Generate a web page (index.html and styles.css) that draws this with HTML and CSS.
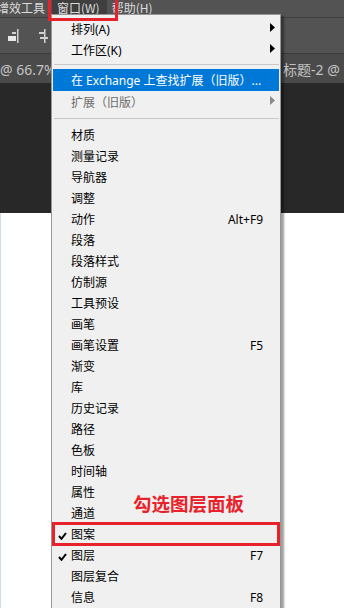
FILE: index.html
```html
<!DOCTYPE html>
<html lang="zh-CN">
<head>
<meta charset="utf-8">
<title>窗口菜单</title>
<link rel="stylesheet" href="styles.css">
</head>
<body>
<div class="app">
  <div class="menubar">
    <span class="mb-item mb-first">增效工具</span>
    <span class="mb-item mb-active">窗口(W)</span>
    <span class="mb-item">帮助(H)</span>
  </div>
  <div class="toolbar">
    <svg class="tool-icon" width="12" height="15" viewBox="0 0 12 15">
      <rect x="10" y="0" width="1.5" height="14" fill="#d0d0d0"/>
      <rect x="5" y="3" width="4" height="2" fill="#d0d0d0"/>
      <rect x="1" y="7" width="8" height="5" fill="#e8e8e8"/>
    </svg>
    <svg class="tool-icon" width="12" height="15" viewBox="0 0 12 15">
      <rect x="1" y="3" width="5" height="2" fill="#d0d0d0"/>
      <rect x="6" y="0" width="1.5" height="14" fill="#d0d0d0"/>
      <rect x="2" y="8" width="8" height="2" fill="#d0d0d0"/>
    </svg>
  </div>
  <div class="tabs">
    <span class="tab tab-first">@ 66.7% (图层 1, RGB/8#) ×</span>
    <span class="tab">标题-2 @ 66.7% (RGB/8#)</span>
  </div>
  <div class="canvas-dark"></div>
  <div class="canvas-white"></div>

  <div class="menu">
    <div class="item"><span class="chk"></span><span class="label">排列(A)</span><span class="sc"></span><span class="sub"><svg width="5" height="9" viewBox="0 0 5 9"><polygon points="0,0 5,4.5 0,9" fill="#000"/></svg></span></div>
    <div class="item"><span class="chk"></span><span class="label">工作区(K)</span><span class="sc"></span><span class="sub"><svg width="5" height="9" viewBox="0 0 5 9"><polygon points="0,0 5,4.5 0,9" fill="#000"/></svg></span></div>
    <div class="sep sep-a"></div>
    <div class="item hl"><span class="chk"></span><span class="label">在 Exchange 上查找扩展（旧版）...</span><span class="sc"></span><span class="sub"></span></div>
    <div class="item dis"><span class="chk"></span><span class="label">扩展（旧版）</span><span class="sc"></span><span class="sub"><svg width="5" height="9" viewBox="0 0 5 9"><polygon points="0,0 5,4.5 0,9" fill="#8a8a8a"/></svg></span></div>
    <div class="sep sep-b"></div>
    <div class="item"><span class="chk"></span><span class="label">材质</span><span class="sc"></span><span class="sub"></span></div>
    <div class="item"><span class="chk"></span><span class="label">测量记录</span><span class="sc"></span><span class="sub"></span></div>
    <div class="item"><span class="chk"></span><span class="label">导航器</span><span class="sc"></span><span class="sub"></span></div>
    <div class="item"><span class="chk"></span><span class="label">调整</span><span class="sc"></span><span class="sub"></span></div>
    <div class="item"><span class="chk"></span><span class="label">动作</span><span class="sc">Alt+F9</span><span class="sub"></span></div>
    <div class="item"><span class="chk"></span><span class="label">段落</span><span class="sc"></span><span class="sub"></span></div>
    <div class="item"><span class="chk"></span><span class="label">段落样式</span><span class="sc"></span><span class="sub"></span></div>
    <div class="item"><span class="chk"></span><span class="label">仿制源</span><span class="sc"></span><span class="sub"></span></div>
    <div class="item"><span class="chk"></span><span class="label">工具预设</span><span class="sc"></span><span class="sub"></span></div>
    <div class="item"><span class="chk"></span><span class="label">画笔</span><span class="sc"></span><span class="sub"></span></div>
    <div class="item"><span class="chk"></span><span class="label">画笔设置</span><span class="sc">F5</span><span class="sub"></span></div>
    <div class="item"><span class="chk"></span><span class="label">渐变</span><span class="sc"></span><span class="sub"></span></div>
    <div class="item"><span class="chk"></span><span class="label">库</span><span class="sc"></span><span class="sub"></span></div>
    <div class="item"><span class="chk"></span><span class="label">历史记录</span><span class="sc"></span><span class="sub"></span></div>
    <div class="item"><span class="chk"></span><span class="label">路径</span><span class="sc"></span><span class="sub"></span></div>
    <div class="item"><span class="chk"></span><span class="label">色板</span><span class="sc"></span><span class="sub"></span></div>
    <div class="item"><span class="chk"></span><span class="label">时间轴</span><span class="sc"></span><span class="sub"></span></div>
    <div class="item"><span class="chk"></span><span class="label">属性</span><span class="sc"></span><span class="sub"></span></div>
    <div class="item"><span class="chk"></span><span class="label">通道</span><span class="sc"></span><span class="sub"></span></div>
    <div class="item"><span class="chk"><svg width="9" height="8" viewBox="0 0 9 8"><path d="M1 4 L3.5 6.8 L8 1" stroke="#000" stroke-width="2" fill="none"/></svg></span><span class="label">图案</span><span class="sc"></span><span class="sub"></span></div>
    <div class="item"><span class="chk"><svg width="9" height="8" viewBox="0 0 9 8"><path d="M1 4 L3.5 6.8 L8 1" stroke="#000" stroke-width="2" fill="none"/></svg></span><span class="label">图层</span><span class="sc">F7</span><span class="sub"></span></div>
    <div class="item"><span class="chk"></span><span class="label">图层复合</span><span class="sc"></span><span class="sub"></span></div>
    <div class="item"><span class="chk"></span><span class="label">信息</span><span class="sc">F8</span><span class="sub"></span></div>
  </div>

  <div class="mark mark-top"></div>
  <div class="mark mark-item"></div>
  <div class="note">勾选图层面板</div>
</div>
</body>
</html>
```
FILE: styles.css
```css
html, body {
  margin: 0;
  padding: 0;
}
body {
  width: 344px;
  height: 608px;
  overflow: hidden;
  font-family: "Noto Sans", "Noto Sans CJK SC", sans-serif;
  font-size: 12px;
}
.app {
  position: relative;
  width: 344px;
  height: 608px;
  overflow: hidden;
  display: flex;
  flex-direction: column;
  background: #ffffff;
}
.menubar {
  height: 17px;
  flex: none;
  background: #535353;
  border-bottom: 1px solid #3e3e3e;
  display: flex;
  align-items: stretch;
  color: #dcdcdc;
  font-family: "Noto Sans CJK SC", sans-serif;
  font-size: 12px;
  line-height: 16px;
  white-space: nowrap;
}
.mb-item {
  padding: 0 5px;
}
.mb-first {
  margin-left: -3px;
  padding-left: 0;
  padding-right: 7px;
}
.mb-active {
  background: #3f3f3f;
  padding-right: 7px;
}
.mb-item:last-child {
  padding-left: 5px;
}
.toolbar {
  height: 35px;
  flex: none;
  background: #535353;
  border-bottom: 1px solid #3a3a3a;
  display: flex;
  align-items: center;
  gap: 19px;
  padding-left: 7px;
}
.tool-icon {
  display: block;
  margin-top: 1px;
}
.tabs {
  height: 29px;
  flex: none;
  background: #4a4a4a;
  display: flex;
  align-items: center;
  white-space: nowrap;
  color: #c4c4c4;
  font-size: 14px;
  overflow: hidden;
}
.tab-first {
  width: 283px;
  flex: none;
  overflow: hidden;
}
.canvas-dark {
  height: 130px;
  flex: none;
  background: #282828;
}
.canvas-white {
  flex: 1;
  background: #ffffff;
  border-left: 1px solid #cfdcea;
}

/* dropdown menu */
.menu {
  position: absolute;
  left: 51px;
  top: 14px;
  width: 230px;
  bottom: -20px;
  box-sizing: border-box;
  background: #f0f0f0;
  border: 1px solid #979797;
  box-shadow: 3px 2px 2px rgba(0, 0, 0, 0.38);
  padding-top: 4px;
  color: #000;
}
.item {
  height: 21px;
  margin: 0 1px;
  display: grid;
  grid-template-columns: 18px 1fr auto 16px;
  align-items: center;
  line-height: 21px;
  white-space: nowrap;
}
.chk {
  display: flex;
  align-items: center;
  padding-left: 5px;
  padding-top: 2px;
}
.chk svg {
  display: block;
}
.label {
  font-family: "Noto Sans", "Noto Sans CJK SC", sans-serif;
}
.sc {
  text-align: right;
}
.sub {
  display: flex;
  align-items: center;
  padding-left: 7px;
  margin-top: -4px;
}
.sub svg {
  display: block;
}
.item.hl {
  background: #0078d7;
  color: #ffffff;
  height: 22px;
  line-height: 23px;
}
.item.dis {
  color: #6d6d6d;
  height: 22px;
  line-height: 23px;
}
.sep {
  height: 1px;
  background: #c8c8c8;
  margin: 0 1px 0 2px;
}
.sep-a {
  margin-top: 3px;
  margin-bottom: 4px;
}
.sep-b {
  margin-top: 5px;
  margin-bottom: 6px;
}

/* annotations */
.mark {
  position: absolute;
  box-sizing: border-box;
  border: 3px solid #e8222a;
}
.mark-top {
  left: 48px;
  top: -3px;
  width: 70px;
  height: 24px;
}
.mark-item {
  left: 52px;
  top: 522px;
  width: 228px;
  height: 24px;
}
.note {
  position: absolute;
  left: 133px;
  top: 491px;
  font-family: "Noto Sans CJK SC", sans-serif;
  font-weight: 700;
  font-size: 18.5px;
  line-height: 24px;
  color: #e8222a;
  white-space: nowrap;
}
```
